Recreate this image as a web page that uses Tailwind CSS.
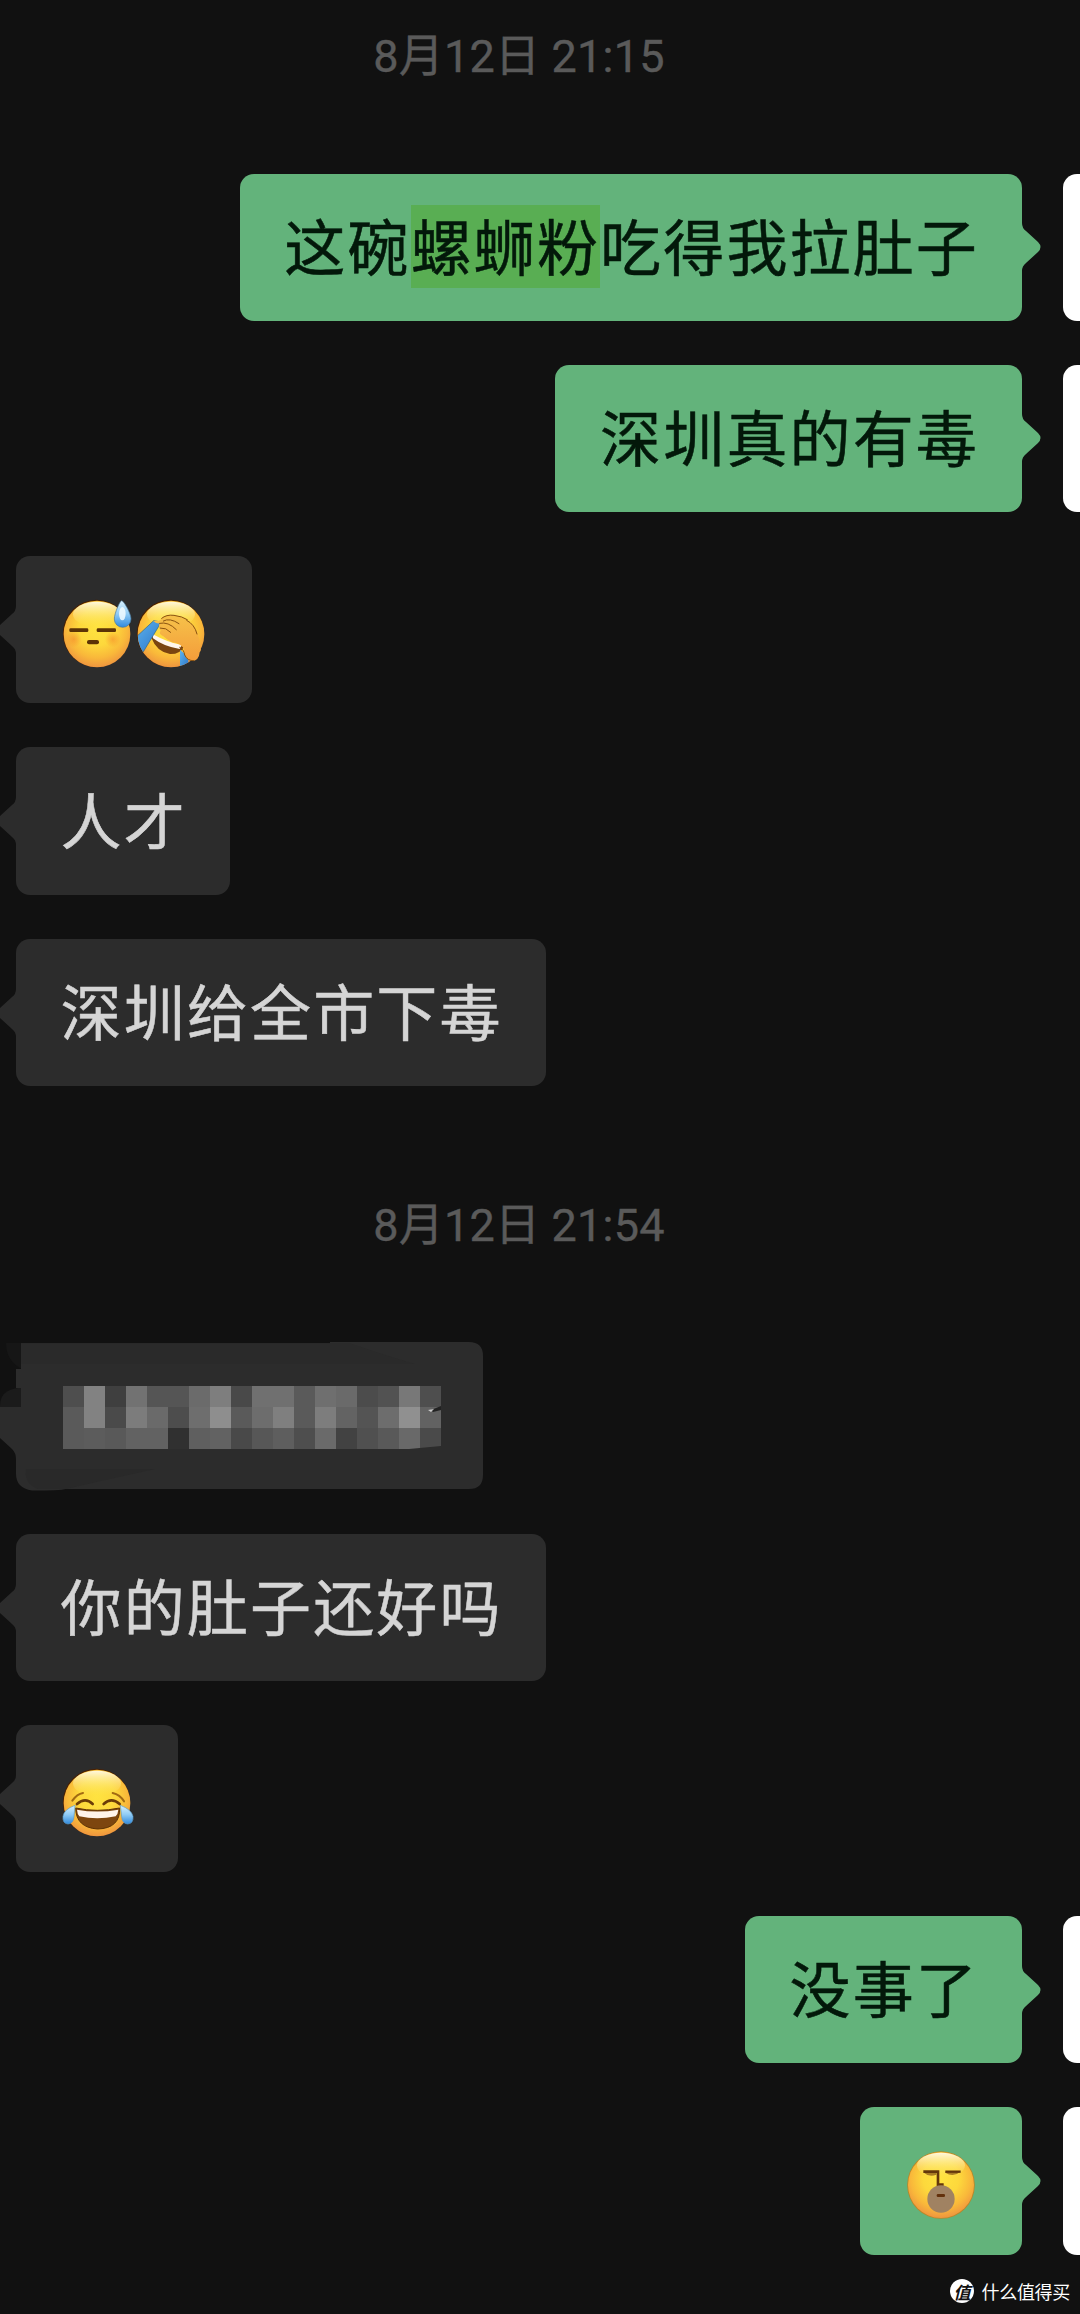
<!DOCTYPE html>
<html lang="zh-CN">
<head>
<meta charset="utf-8">
<title>聊天记录</title>
<script src="https://cdn.jsdelivr.net/npm/@tailwindcss/browser@4"></script>
</head>
<body class="bg-[#111111]">
<!-- shared shapes -->
<svg class="absolute size-0">
  <defs>
    <radialGradient id="face" cx="50%" cy="40%" r="61%">
      <stop offset="0" stop-color="#ffe340"/><stop offset=".45" stop-color="#fdd83c"/><stop offset=".75" stop-color="#f9b83a"/><stop offset="1" stop-color="#ee933f"/>
    </radialGradient>
    <linearGradient id="shine" x1="0" y1="0" x2="0" y2="1">
      <stop offset="0" stop-color="#fffbe6" stop-opacity=".95"/><stop offset="1" stop-color="#ffe95a" stop-opacity="0"/>
    </linearGradient>
    <linearGradient id="drop" x1="0" y1="0" x2="0" y2="1">
      <stop offset="0" stop-color="#d8f1ff"/><stop offset=".5" stop-color="#8fcbf5"/><stop offset="1" stop-color="#3089dc"/>
    </linearGradient>
    <linearGradient id="stream" x1="0" y1="0" x2="1" y2="1">
      <stop offset="0" stop-color="#5fb4ee"/><stop offset="1" stop-color="#2b75c8"/>
    </linearGradient>
    <linearGradient id="hand" x1="0" y1="0" x2="0" y2="1">
      <stop offset="0" stop-color="#f6c24a"/><stop offset="1" stop-color="#f49c3a"/>
    </linearGradient>
    <radialGradient id="blush"><stop offset="0" stop-color="#f58a2c" stop-opacity=".6"/><stop offset="1" stop-color="#f58a2c" stop-opacity="0"/></radialGradient>
    <clipPath id="faceclip"><circle cx="111" cy="111" r="100"/></clipPath>
    <g id="head">
      <circle cx="109.500" cy="109" r="101" fill="#4a2000"/>
      <circle cx="111" cy="111" r="100" fill="url(#face)"/>
      <ellipse cx="111" cy="52" rx="72" ry="38" fill="url(#shine)"/>
    </g>
    <path id="tail-r" d="M0 0Q0 5 4 8L16 19Q21 24 16 29L4 40Q0 43 0 48Z"/>
  </defs>
</svg>

<main class="flex h-[2314px] w-[1080px] flex-col overflow-hidden font-['Noto_Sans_CJK_SC',sans-serif] text-[61px] leading-[80px] tracking-[2.150px]">
  <div class="flex h-[112px] items-center justify-center pt-[1px] pr-[42px] font-[Roboto,'Noto_Sans_CJK_SC',sans-serif] text-[45px] tracking-[0.200px] text-[#5a5a5a] [-webkit-text-stroke:0.4px_#5a5a5a]"><time>8月12日 21:15</time></div>

  <section class="mt-[61.600px] flex flex-col gap-[44px]">
    <div class="flex h-[147.300px] justify-end">
      <div class="flex items-center rounded-[14px] bg-[#63b37b] pr-[43px] pb-[5px] pl-[44.600px] text-[#03180a] [-webkit-text-stroke:0.5px_#03180a]"><p class="whitespace-nowrap">这碗<span class="bg-[linear-gradient(#59ae53,#59ae53)] bg-[length:100%_83px] bg-no-repeat [background-position:0_5px]">螺蛳粉</span>吃得我拉肚子</p></div>
      <svg class="mt-[49.500px] h-[48px] w-[40.500px] shrink-0 fill-[#63b37b]"><use href="#tail-r"/></svg>
      <div class="w-[17.500px] shrink-0 rounded-l-[14px] bg-white"></div>
    </div>
    <div class="flex h-[147.300px] justify-end">
      <div class="flex items-center rounded-[14px] bg-[#63b37b] pr-[43px] pb-[5px] pl-[45px] text-[#03180a] [-webkit-text-stroke:0.5px_#03180a]"><p class="whitespace-nowrap">深圳真的有毒</p></div>
      <svg class="mt-[49.500px] h-[48px] w-[40.500px] shrink-0 fill-[#63b37b]"><use href="#tail-r"/></svg>
      <div class="w-[17.500px] shrink-0 rounded-l-[14px] bg-white"></div>
    </div>
    <div class="flex h-[147.300px]">
      <svg class="mt-[50px] h-[48px] w-4 shrink-0 fill-[#2c2c2c]"><use href="#tail-r" transform="translate(16 0) scale(-1 1)"/></svg>
      <div class="flex items-center rounded-[14px] bg-[#2c2c2c] px-[44px] pt-[8px]">
        <svg class="size-[74px]" viewBox="0 0 222 222">
          <use href="#head"/>
          <circle cx="41" cy="127" r="24" fill="url(#blush)"/><circle cx="158" cy="127" r="24" fill="url(#blush)"/>
          <rect x="28" y="94" width="57" height="11" rx="4" fill="#5c3306"/><rect x="110" y="94" width="58" height="11" rx="4" fill="#5c3306"/>
          <rect x="81" y="129" width="36" height="13" rx="6" fill="#5c3306"/>
          <path d="M185 11C180 11 163 49 163 66a25 25 0 0 0 50 0C213 49 191 11 185 11Z" fill="url(#drop)" stroke="#4a7695" stroke-width="2"/>
          <ellipse cx="187" cy="50" rx="10" ry="20" fill="#f2fbff" opacity=".85"/>
        </svg>
        <svg class="size-[74px]" viewBox="0 0 222 222">
          <use href="#head"/>
          <g clip-path="url(#faceclip)">
            <path d="M52 112Q100 143 150 149Q138 172 108 171Q68 164 52 122Z" fill="#7a4410"/>
            <path d="M54 110Q98 135 143 144L137 156Q90 149 57 124Z" fill="#fff5ec"/>
            <path d="M59 71L82 75L27 166L0 142V126Z" fill="url(#stream)" stroke="#2c6287" stroke-width="2"/>
            <path d="M138 158L163 180V213H138Z" fill="url(#stream)"/>
          </g>
          <path d="M58 72Q80 74 83 63Q95 51 120 55Q145 58 160 68Q181 82 190 107Q199 129 198 151Q204 158 197 166Q195 192 173 192Q152 191 150 157Q142 139 114 136Q98 128 88 118Q72 110 80 101Q70 88 78 78Q68 82 58 72Z" fill="url(#hand)"/>
          <path d="M83 64Q97 52 120 55Q145 58 160 68M88 72Q107 61 135 80M77 79Q103 73 127 98M79 93Q96 91 110 106M158 70Q182 82 189 111M137 151Q150 157 152 174Q160 192 179 191" fill="none" stroke="#8a5310" stroke-width="3" stroke-linecap="round"/>
        </svg>
      </div>
    </div>
    <div class="flex h-[147.300px]">
      <svg class="mt-[50px] h-[48px] w-4 shrink-0 fill-[#2c2c2c]"><use href="#tail-r" transform="translate(16 0) scale(-1 1)"/></svg>
      <div class="flex items-center rounded-[14px] bg-[#2c2c2c] pr-[43px] pb-[5px] pl-[44.600px] text-[#d5d5d5] [-webkit-text-stroke:0.5px_#d5d5d5]"><p class="whitespace-nowrap">人才</p></div>
    </div>
    <div class="flex h-[147.300px]">
      <svg class="mt-[50px] h-[48px] w-4 shrink-0 fill-[#2c2c2c]"><use href="#tail-r" transform="translate(16 0) scale(-1 1)"/></svg>
      <div class="flex items-center rounded-[14px] bg-[#2c2c2c] pr-[43px] pb-[5px] pl-[44.600px] text-[#d5d5d5] [-webkit-text-stroke:0.5px_#d5d5d5]"><p class="whitespace-nowrap">深圳给全市下毒</p></div>
    </div>
  </section>

  <div class="mt-[83px] flex h-[112px] shrink-0 items-center justify-center pt-[1px] pr-[42px] font-[Roboto,'Noto_Sans_CJK_SC',sans-serif] text-[45px] tracking-[0.200px] text-[#5a5a5a] [-webkit-text-stroke:0.4px_#5a5a5a]"><time>8月12日 21:54</time></div>

  <section class="mt-[61.200px] flex flex-col gap-[44px]">
    <!-- pixelated message -->
    <div class="h-[147.300px]">
      <svg class="h-[150px] w-[520px]" viewBox="0 0 520 150">
        <path d="M6 1H24V28Q6 20 6 1Z" fill="#161616"/>
        <path d="M0 64Q0 48 18 46H22V66H0Z" fill="#1b1b1b"/>
        <path d="M21 1.300H330V0H469Q483 0 483 14V133Q483 147 469 147H66Q60 148.500 32 148.500Q16 146 16 132V117Q16 111 12 107L0 96V65H21V46H16V27H21Z" fill="#2c2c2c"/>
        <path d="M26 127H155Q105 138 66 147H38Q24 142 26 127Z" fill="#292929"/>
        <path d="M21 1.300H350Q390 15 415 22H21Z" fill="#2a2a2a"/>
        <g id="mosaic" shape-rendering="crispEdges"></g>
        <path d="M441 104L409 107H441Z" fill="#2c2c2c"/>
        <path d="M441 64L431 68L433 70L441 68Z" fill="#222"/><path d="M428 68L434 67L431 70Z" fill="#ccc"/>
      </svg>
    </div>
    <div class="flex h-[147.300px]">
      <svg class="mt-[50px] h-[48px] w-4 shrink-0 fill-[#2c2c2c]"><use href="#tail-r" transform="translate(16 0) scale(-1 1)"/></svg>
      <div class="flex items-center rounded-[14px] bg-[#2c2c2c] pr-[43px] pb-[5px] pl-[44.600px] text-[#d5d5d5] [-webkit-text-stroke:0.5px_#d5d5d5]"><p class="whitespace-nowrap">你的肚子还好吗</p></div>
    </div>
    <div class="flex h-[147.300px]">
      <svg class="mt-[50px] h-[48px] w-4 shrink-0 fill-[#2c2c2c]"><use href="#tail-r" transform="translate(16 0) scale(-1 1)"/></svg>
      <div class="flex items-center rounded-[14px] bg-[#2c2c2c] px-[44px] pt-[8px]">
        <svg class="size-[74px] overflow-visible" viewBox="0 0 222 222">
          <use href="#head"/>
          <path d="M37 104Q51 84 69 81M158 81Q180 86 192 106" fill="none" stroke="#a26a12" stroke-width="6" stroke-linecap="round"/>
          <path d="M51 114Q76 92 98 114M131 114Q154 92 179 114" fill="none" stroke="#6b3c08" stroke-width="8" stroke-linecap="round"/>
          <path d="M47 126Q111 140 179 126Q181 187 113 189Q48 185 47 126Z" fill="#7d460f" stroke="#5c3205" stroke-width="3"/>
          <path d="M51 131Q111 142 175 131Q174 144 167 151Q111 163 58 151Q52 144 51 131Z" fill="#fff4ea"/>
          <path d="M45 118Q12 130 9 151Q7 173 24 174Q40 173 42 152ZM181 118Q214 130 219 151Q221 173 203 174Q187 173 185 152Z" fill="url(#drop)" stroke="#5a9cc8" stroke-width="2"/>
        </svg>
      </div>
    </div>
    <div class="flex h-[147.300px] justify-end">
      <div class="flex items-center rounded-[14px] bg-[#63b37b] pr-[43px] pb-[5px] pl-[45px] text-[#03180a] [-webkit-text-stroke:0.5px_#03180a]"><p class="whitespace-nowrap">没事了</p></div>
      <svg class="mt-[49.500px] h-[48px] w-[40.500px] shrink-0 fill-[#63b37b]"><use href="#tail-r"/></svg>
      <div class="w-[17.500px] shrink-0 rounded-l-[14px] bg-white"></div>
    </div>
    <div class="flex h-[147.300px] justify-end">
      <div class="flex items-center rounded-[14px] bg-[#63b37b] px-[44px] pt-[7px]">
        <svg class="size-[74px]" viewBox="0 0 222 222">
          <circle cx="111" cy="111" r="101.500" fill="#b98728"/>
          <circle cx="111" cy="111" r="99" fill="url(#face)"/>
          <ellipse cx="111" cy="52" rx="72" ry="38" fill="url(#shine)"/>
          <path d="M60 74H97V80Q76 89 60 74ZM124 71H169Q148 90 124 74Z" fill="#a97d23"/>
          <path d="M58 71H102V110H119" fill="none" stroke="#64370a" stroke-width="8"/>
          <path d="M124 71H170" stroke="#64370a" stroke-width="7"/>
          <circle cx="111" cy="153" r="41" fill="#a08262"/>
          <rect x="98" y="138" width="25" height="9" rx="4" fill="#63310c"/>
        </svg>
      </div>
      <svg class="mt-[49.500px] h-[48px] w-[40.500px] shrink-0 fill-[#63b37b]"><use href="#tail-r"/></svg>
      <div class="w-[17.500px] shrink-0 rounded-l-[14px] bg-white"></div>
    </div>
  </section>

  <footer class="mt-[24.300px] flex h-6 shrink-0 items-center justify-end gap-[7.500px] pr-[10px] text-white">
    <span class="flex size-6 items-center justify-center rounded-full bg-white text-[17px] leading-none font-bold tracking-normal text-[#111111]"><i>值</i></span>
    <span class="text-[18px] leading-6 tracking-[-0.300px]">什么值得买</span>
  </footer>
</main>
<script>
  // grey levels of the mosaic blocks, row by row
  const rows = [
    '4e 82 3f 72 55 55 6b 7e 49 70 70 5a 6f 6a 4c 52 78 4e',
    '5a 82 4a 7c 6a 4d 6e 8e 5a 6d 7f 5a 7d 63 54 6d 90 62',
    '5a 5c 59 62 62 30 5f 62 49 57 5e 4e 6a 42 50 59 69 4a'
  ];
  document.getElementById('mosaic').innerHTML = rows.map((r, y) => r.split(' ').map((v, x) =>
    `<rect x="${63 + x * 21}" y="${43.700 + y * 21}" width="21" height="21" fill="#${v}${v}${v}"/>`).join('')).join('');
</script>
</body>
</html>
